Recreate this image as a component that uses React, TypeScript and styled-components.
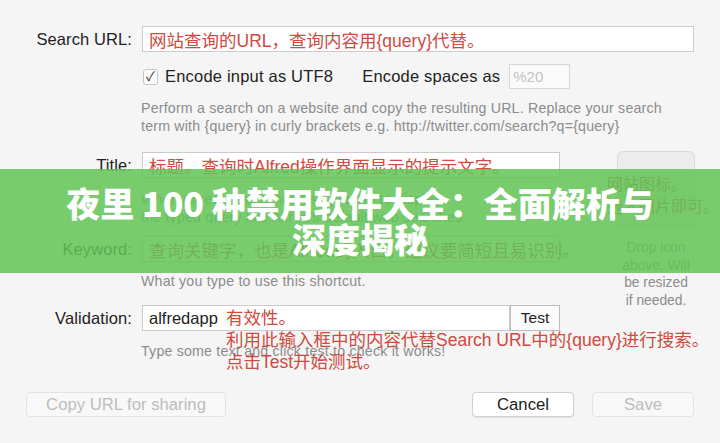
import styled, { createGlobalStyle } from 'styled-components'

const GlobalStyle = createGlobalStyle`
  html, body {
    margin: 0;
    padding: 0;
    background: #f5f5f5;
  }
  body {
    font-family: 'Liberation Sans', 'Noto Sans CJK SC', sans-serif;
    color: #222;
  }
`

const App = () => {
  return (
    <>
      <GlobalStyle />
      <Dialog>
        <Row>
          <Label>Search URL:</Label>
          <TextField>
            <Note>网站查询的URL，查询内容用{'{query}'}代替。</Note>
          </TextField>
        </Row>

        <OptionsRow>
          <Checkbox>✓</Checkbox>
          <OptionText>Encode input as UTF8</OptionText>
          <OptionText $gap>Encode spaces as</OptionText>
          <SmallField>%20</SmallField>
        </OptionsRow>

        <Hint $indent $top={10}>
          Perform a search on a website and copy the resulting URL. Replace your search
          <br />
          term with {'{query}'} in curly brackets e.g. http://twitter.com/search?q={'{query}'}
        </Hint>

        <Middle>
          <Fields>
            <Row>
              <Label>Title:</Label>
              <TextField>
                <Note>标题。查询时Alfred操作界面显示的提示文字。</Note>
              </TextField>
            </Row>
            <Hint $indent $top={12}>
              When Alfred shows this, use {'{query}'} to display
              <br />
              the typed query like Alfred's default web searches.
            </Hint>

            <Row $top={10}>
              <Label>Keyword:</Label>
              <TextField>
                <Note>查询关键字，也是Alfred的入口，建议要简短且易识别。</Note>
              </TextField>
            </Row>
            <Hint $indent $top={10}>What you type to use this shortcut.</Hint>

            <Row $top={15}>
              <Label>Validation:</Label>
              <InputGroup>
                <TextField $grow>
                  <Value>alfredapp</Value>
                </TextField>
                <TestButton>Test</TestButton>
                <Annotation>
                  有效性。
                  <br />
                  利用此输入框中的内容代替Search URL中的{'{query}'}进行搜索。
                  <br />
                  点击Test开始测试。
                </Annotation>
              </InputGroup>
            </Row>
            <Hint $indent $top={11}>Type some text and click test to check it works!</Hint>
          </Fields>

          <IconColumn>
            <IconBox>
              <IconWell />
              <WellNote>
                网站图标。
                <br />
                拖入图片即可。
              </WellNote>
              <DropText>
                Drop icon
                <br />
                above. Will
                <br />
                be resized
                <br />
                if needed.
              </DropText>
            </IconBox>
          </IconColumn>
        </Middle>

        <Footer>
          <Button $width={200} disabled>Copy URL for sharing</Button>
          <ButtonGroup>
            <Button $width={102}>Cancel</Button>
            <Button $width={102} disabled>Save</Button>
          </ButtonGroup>
        </Footer>
      </Dialog>

      <Banner>
        夜里 100 种禁用软件大全：全面解析与
        <br />
        深度揭秘
      </Banner>
    </>
  )
}

const Dialog = styled.div`
  width: 720px;
  height: 443px;
  box-sizing: border-box;
  padding: 26px 26px 0 16px;
  overflow: hidden;
`

const Row = styled.div<{ $top?: number }>`
  display: grid;
  grid-template-columns: 116px minmax(0, 1fr);
  column-gap: 10px;
  align-items: center;
  margin-top: ${(p) => p.$top ?? 0}px;
`

const Label = styled.div`
  text-align: right;
  font-size: 16.5px;
  letter-spacing: 0.1px;
  color: #222;
`

const TextField = styled.div<{ $grow?: boolean }>`
  height: 26px;
  min-width: 0;
  box-sizing: border-box;
  background: #fff;
  border: 1px solid #cbcbcb;
  display: flex;
  align-items: center;
  padding: 0 6px;
  white-space: nowrap;
  flex: ${(p) => (p.$grow ? 1 : 'initial')};
`

const Note = styled.span`
  color: #cf4a3f;
  font-size: 17.5px;
`

const Value = styled.span`
  color: #222;
  font-size: 16.5px;
`

const OptionsRow = styled.div`
  display: flex;
  align-items: center;
  margin: 12px 0 0 127px;
  height: 25px;
`

const Checkbox = styled.div`
  width: 13px;
  height: 14px;
  border: 1px solid #c4c4c4;
  border-radius: 3px;
  background: #fff;
  font-size: 13px;
  line-height: 14px;
  text-align: center;
  color: #333;
  margin-right: 7px;
`

const OptionText = styled.span<{ $gap?: boolean }>`
  font-size: 16.5px;
  letter-spacing: 0.2px;
  margin-left: ${(p) => (p.$gap ? 29 : 0)}px;
  margin-right: ${(p) => (p.$gap ? 9 : 0)}px;
`

const SmallField = styled.div`
  width: 61px;
  height: 25px;
  box-sizing: border-box;
  border: 1px solid #d6d6d6;
  background: #fafafa;
  color: #c2c2c2;
  font-size: 15px;
  display: flex;
  align-items: center;
  padding-left: 3px;
`

const Hint = styled.div<{ $indent?: boolean; $top?: number }>`
  margin-top: ${(p) => p.$top ?? 0}px;
  margin-left: ${(p) => (p.$indent ? 125 : 0)}px;
  font-size: 14.2px;
  line-height: 18px;
  letter-spacing: 0.2px;
  color: #8c8c8c;
  white-space: nowrap;
`

const Middle = styled.div`
  display: flex;
  margin-top: 17px;
`

const Fields = styled.div`
  width: 544px;
`

const InputGroup = styled.div`
  position: relative;
  display: flex;
`

const TestButton = styled.div`
  width: 50px;
  height: 26px;
  box-sizing: border-box;
  border: 1px solid #bdbdbd;
  background: #fbfbfb;
  display: flex;
  align-items: center;
  justify-content: center;
  font-size: 15.5px;
  color: #222;
`

const Annotation = styled.div`
  position: absolute;
  left: 84px;
  top: 2px;
  font-size: 17.5px;
  line-height: 22px;
  color: #cf4a3f;
  white-space: nowrap;
`

const IconColumn = styled.div`
  flex: 1;
  display: flex;
  justify-content: flex-end;
  margin-top: -1px;
`

const IconBox = styled.div`
  position: relative;
  width: 78px;
  display: flex;
  flex-direction: column;
  align-items: center;
  margin-right: -1px;
`

const IconWell = styled.div`
  width: 78px;
  height: 77px;
  box-sizing: border-box;
  border: 1px solid #d9d9d9;
  border-radius: 6px;
  background: #ececec;
`

const WellNote = styled.div`
  position: absolute;
  left: -10px;
  top: 23px;
  font-size: 16px;
  line-height: 22px;
  color: #cf4a3f;
  white-space: nowrap;
`

const DropText = styled.div`
  margin-top: 11px;
  font-size: 13.8px;
  line-height: 17.5px;
  color: #8c8c8c;
  text-align: center;
  white-space: nowrap;
`

const Footer = styled.div`
  display: flex;
  justify-content: space-between;
  margin: 32px 0 0 10px;
`

const ButtonGroup = styled.div`
  display: flex;
  gap: 18px;
`

const Button = styled.button<{ $width: number }>`
  width: ${(p) => p.$width}px;
  height: 25px;
  box-sizing: border-box;
  font-family: inherit;
  font-size: 16.7px;
  color: #222;
  background: #fff;
  border: 1px solid #cfcfcf;
  border-radius: 4px;
  box-shadow: 0 1px 1px rgba(0, 0, 0, 0.08);
  padding: 0;

  &:disabled {
    color: #bdbdbd;
    background: #f8f8f8;
    border-color: #e3e3e3;
    box-shadow: none;
  }
`

const Banner = styled.div`
  position: absolute;
  left: 0;
  top: 169px;
  width: 720px;
  height: 104px;
  background: rgba(98, 196, 86, 0.85);
  display: flex;
  align-items: center;
  justify-content: center;
  text-align: center;
  color: #fff;
  font-family: 'Noto Sans CJK SC', 'Liberation Sans', sans-serif;
  font-weight: 900;
  font-size: 34px;
  line-height: 36px;
`

export default App
